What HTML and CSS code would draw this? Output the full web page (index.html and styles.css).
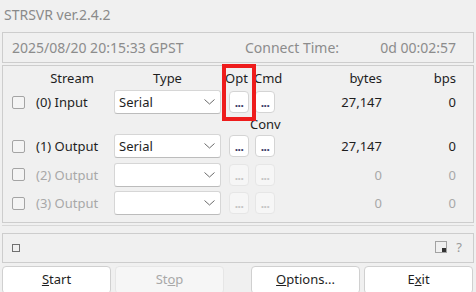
FILE: index.html
```html
<!DOCTYPE html>
<html lang="en">
<head>
    <meta charset="UTF-8">
    <title>STRSVR ver.2.4.2</title>
    <link rel="stylesheet" href="styles.css">
</head>
<body>
    <div class="window">
        <div class="title">STRSVR ver.2.4.2</div>

        <div class="status">
            <span class="status-time">2025/08/20 20:15:33 GPST</span>
            <span class="status-label">Connect Time:</span>
            <span class="status-value">0d 00:02:57</span>
        </div>

        <div class="streams">
            <div class="head"></div>
            <div class="head head-stream">Stream</div>
            <div class="head head-type">Type</div>
            <div class="head head-opt">Opt</div>
            <div class="head head-cmd">Cmd</div>
            <div class="head num">bytes</div>
            <div class="head num">bps</div>

            <!-- row 0 -->
            <div class="cell"><span class="check"></span></div>
            <div class="cell label">(0) Input</div>
            <div class="cell"><div class="combo"><span>Serial</span><svg width="11" height="6" viewBox="0 0 11 6"><polyline points="0.5,0.5 5.5,5 10.5,0.5" fill="none" stroke="#6a6a6a" stroke-width="1"/></svg></div></div>
            <div class="cell"><button class="dots dots-opt">...</button></div>
            <div class="cell"><button class="dots">...</button></div>
            <div class="cell num">27,147</div>
            <div class="cell num">0</div>

            <div class="conv">Conv</div>

            <!-- row 1 -->
            <div class="cell"><span class="check"></span></div>
            <div class="cell label">(1) Output</div>
            <div class="cell"><div class="combo"><span>Serial</span><svg width="11" height="6" viewBox="0 0 11 6"><polyline points="0.5,0.5 5.5,5 10.5,0.5" fill="none" stroke="#6a6a6a" stroke-width="1"/></svg></div></div>
            <div class="cell"><button class="dots dots-opt">...</button></div>
            <div class="cell"><button class="dots">...</button></div>
            <div class="cell num">27,147</div>
            <div class="cell num">0</div>

            <!-- row 2 -->
            <div class="cell"><span class="check"></span></div>
            <div class="cell label off">(2) Output</div>
            <div class="cell"><div class="combo"><span></span><svg width="11" height="6" viewBox="0 0 11 6"><polyline points="0.5,0.5 5.5,5 10.5,0.5" fill="none" stroke="#6a6a6a" stroke-width="1"/></svg></div></div>
            <div class="cell"><button class="dots dots-opt off">...</button></div>
            <div class="cell"><button class="dots off">...</button></div>
            <div class="cell num off">0</div>
            <div class="cell num off">0</div>

            <!-- row 3 -->
            <div class="cell"><span class="check"></span></div>
            <div class="cell label off">(3) Output</div>
            <div class="cell"><div class="combo"><span></span><svg width="11" height="6" viewBox="0 0 11 6"><polyline points="0.5,0.5 5.5,5 10.5,0.5" fill="none" stroke="#6a6a6a" stroke-width="1"/></svg></div></div>
            <div class="cell"><button class="dots dots-opt off">...</button></div>
            <div class="cell"><button class="dots off">...</button></div>
            <div class="cell num off">0</div>
            <div class="cell num off">0</div>
        </div>

        <div class="splitter"></div>

        <div class="statusbar">
            <span class="mini-check"></span>
            <span class="statusbar-right">
                <svg width="12" height="12" viewBox="0 0 12 12">
                    <rect x="0.5" y="0.5" width="11" height="11" fill="none" stroke="#555" stroke-width="1" stroke-dasharray="1 1"/>
                    <rect x="7" y="7" width="4" height="4" fill="#333"/>
                </svg>
                <span class="help">?</span>
            </span>
        </div>

        <div class="buttons">
            <button class="btn"><u>S</u>tart</button>
            <button class="btn btn-off">St<u>o</u>p</button>
            <span class="spacer"></span>
            <button class="btn"><u>O</u>ptions...</button>
            <button class="btn">E<u>x</u>it</button>
        </div>

        <div class="highlight"></div>
    </div>
</body>
</html>
```

FILE: styles.css
```css
body {
    margin: 0;
    background-color: #f0f0f0;
    font-family: "Noto Sans", "Open Sans", sans-serif;
    color: #1e1e1e;
    overflow: hidden;
}

.window {
    position: relative;
    width: 476px;
    height: 292px;
}

.title {
    height: 32px;
    line-height: 30px;
    padding-left: 4px;
    font-size: 14px;
    color: #8a8a8a;
}

.status {
    margin: 0 2px;
    height: 29px;
    border: 1px solid #cdcdcd;
    display: grid;
    grid-template-columns: 233px 1fr auto;
    align-items: center;
    padding: 0 17px 0 9px;
    font-size: 14px;
    color: #8c8c8c;
}

.streams {
    margin: 2px 2px 0;
    height: 156px;
    border: 1px solid #cdcdcd;
    display: grid;
    grid-template-columns: 33px 78px 107px 31px 26px 104px 74px;
    grid-template-rows: 24px 24px 20px 28.5px 28.5px 24px;
    align-items: start;
    font-size: 13px;
}

.streams .cell,
.streams .head {
    height: 24px;
    line-height: 24px;
    display: flex;
    align-items: center;
}

.streams .conv {
    grid-column: 1 / -1;
    padding-left: 247px;
    line-height: 20px;
}

.head-stream,
.head-type {
    justify-content: center;
}

.head-stream {
    padding-right: 6px;
}

.head-opt {
    margin-left: 4px;
}

.head-cmd {
    margin-left: 2px;
}

.streams .num {
    justify-content: flex-end;
}

.off {
    color: #a8a8a8;
}

.check {
    display: block;
    width: 11px;
    height: 11px;
    margin-left: 9px;
    border: 1px solid #a4a4a4;
    border-radius: 2px;
    background-color: #f4f4f4;
}

.combo {
    width: 100%;
    height: 24px;
    box-sizing: border-box;
    border: 1px solid #d6d6d6;
    border-bottom-color: #bcbcbc;
    border-radius: 3px;
    background-color: #ffffff;
    display: flex;
    align-items: center;
    justify-content: space-between;
    padding: 0 5px 0 4px;
}

.dots {
    display: block;
    width: 20px;
    height: 22px;
    padding: 2px 0 0;
    border: 1px solid #d4d4d4;
    border-radius: 4px;
    background-color: #ffffff;
    font-family: inherit;
    font-size: 12px;
    font-weight: bold;
    line-height: 12px;
    letter-spacing: -0.5px;
    color: #3a3a66;
}

.dots-opt {
    margin-left: 8px;
}

.cell .dots:not(.dots-opt) {
    margin-left: 3px;
}

.dots.off {
    background-color: #f6f6f6;
    border-color: #e6e6e6;
    color: #c4c4c4;
}

.splitter {
    margin: 2px 2px 0;
    height: 7px;
    border-top: 1px solid #d8d8d8;
}

.statusbar {
    margin: 0 2px;
    height: 28px;
    border: 1px solid #cdcdcd;
    display: flex;
    align-items: center;
    justify-content: space-between;
    padding: 0 11px 0 9px;
}

.mini-check {
    width: 6px;
    height: 6px;
    border: 1px solid #707070;
}

.statusbar-right {
    display: flex;
    align-items: center;
    gap: 9px;
    margin-bottom: 3px;
}

.help {
    font-size: 13px;
    color: #9a9a9a;
}

.buttons {
    display: flex;
    gap: 4px;
    padding: 3px 2px 0;
}

.spacer {
    width: 19px;
}

.btn {
    width: 109px;
    height: 28px;
    border: 1px solid #d0d0d0;
    border-radius: 4px;
    background-color: #ffffff;
    font-family: inherit;
    font-size: 13px;
    color: #1e1e1e;
    padding: 0 0 2px;
}

.btn-off {
    background-color: #f6f6f6;
    border-color: #e6e6e6;
    color: #a8a8a8;
}

.highlight {
    position: absolute;
    left: 222px;
    top: 64px;
    width: 34px;
    height: 57px;
    border: 4px solid #ee1c1c;
    box-sizing: border-box;
}
```
